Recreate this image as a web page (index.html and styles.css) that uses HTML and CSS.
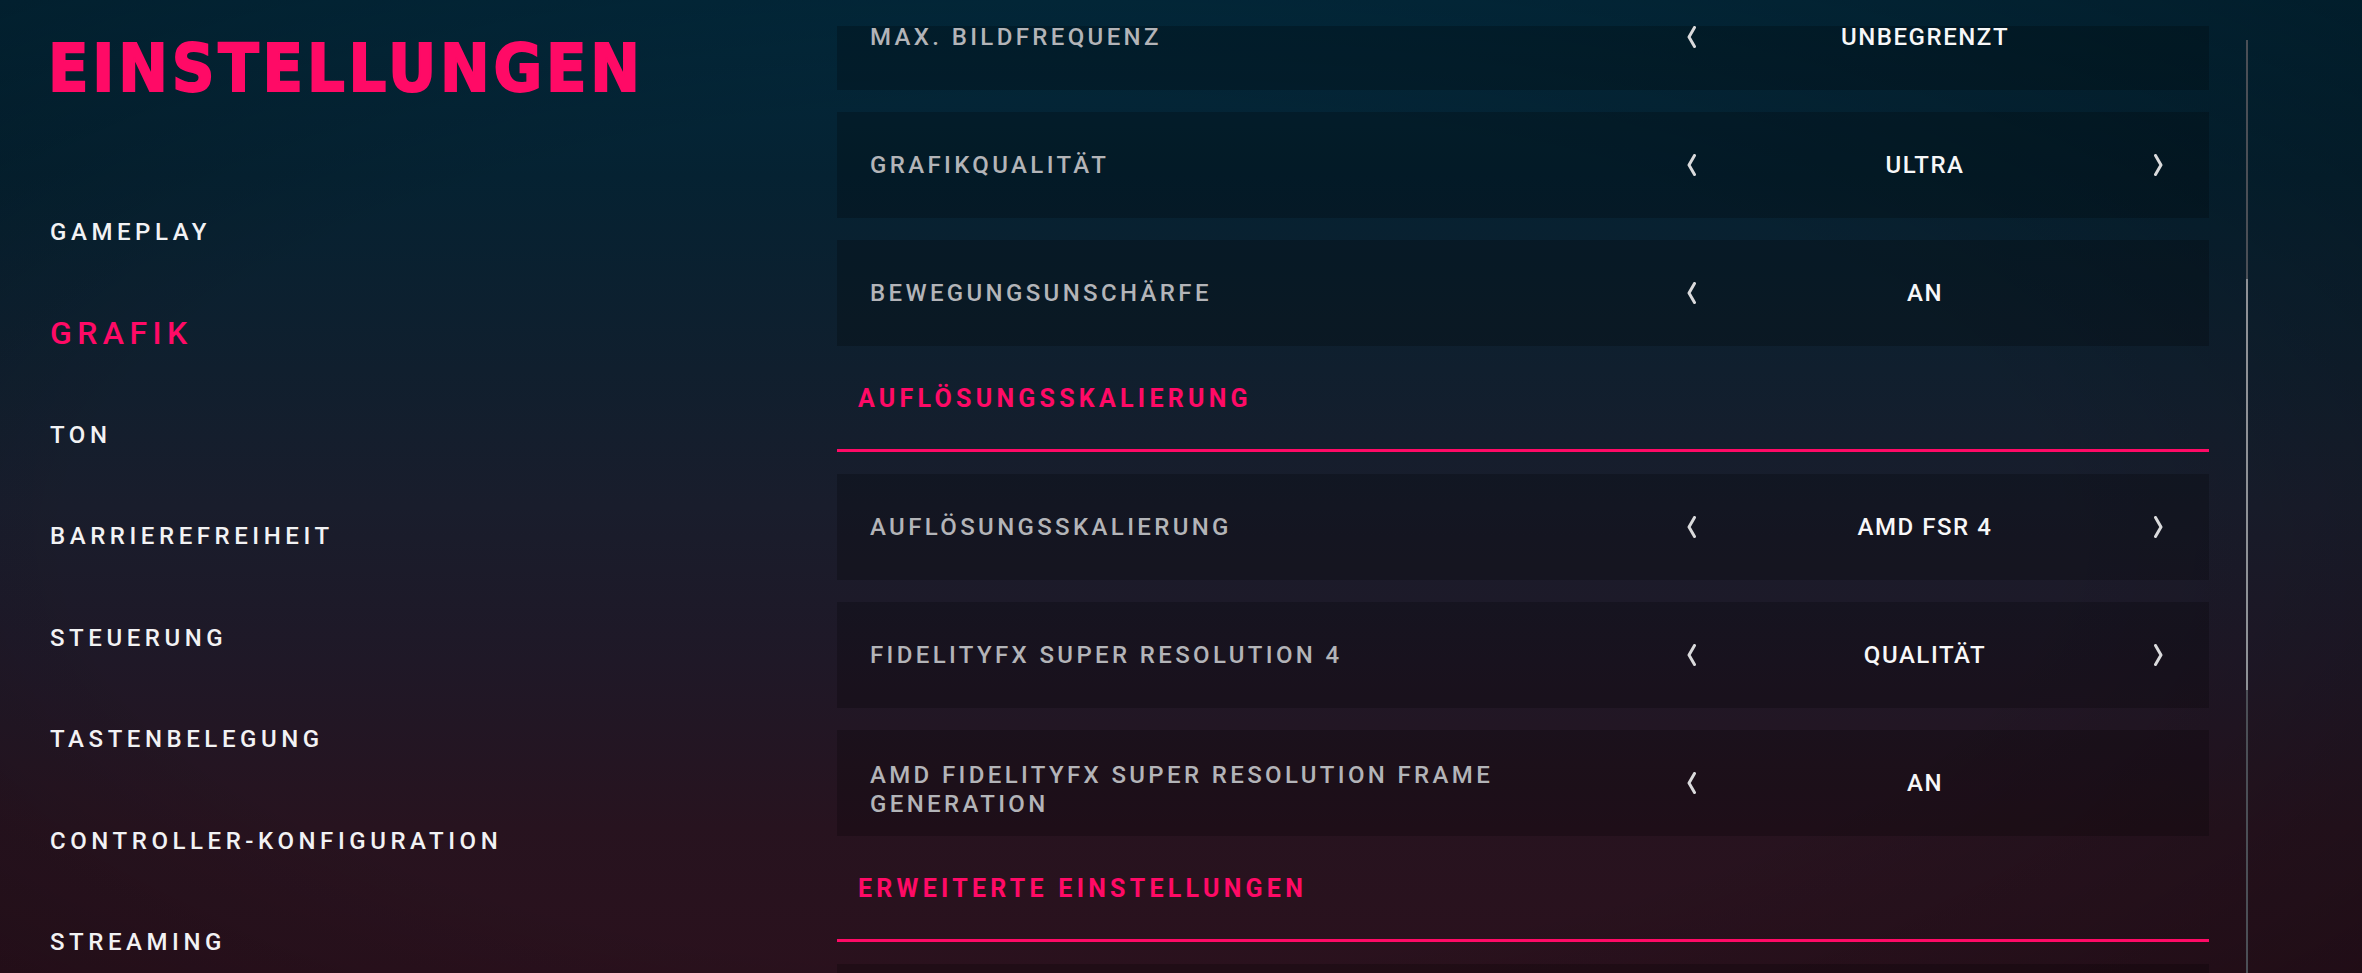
FILE: index.html
```html
<!DOCTYPE html>
<html lang="de">
<head>
<meta charset="utf-8">
<title>Einstellungen</title>
<link rel="stylesheet" href="styles.css">
</head>
<body>
<div class="screen">
  <aside class="sidebar">
    <h1 class="title">EINSTELLUNGEN</h1>
    <nav class="nav">
      <div class="nav-item">GAMEPLAY</div>
      <div class="nav-item active">GRAFIK</div>
      <div class="nav-item">TON</div>
      <div class="nav-item">BARRIEREFREIHEIT</div>
      <div class="nav-item">STEUERUNG</div>
      <div class="nav-item">TASTENBELEGUNG</div>
      <div class="nav-item">CONTROLLER-KONFIGURATION</div>
      <div class="nav-item">STREAMING</div>
    </nav>
  </aside>
  <main class="content">
    <div class="list">
      <div class="row">
        <div class="label">MAX. BILDFREQUENZ</div>
        <div class="control">
          <svg class="arrow" viewBox="0 0 9 22"><polyline points="7.5,1.5 2,11 7.5,20.5"/></svg>
          <span class="value">UNBEGRENZT</span>
          <span class="arrow-space"></span>
        </div>
      </div>
      <div class="row">
        <div class="label">GRAFIKQUALITÄT</div>
        <div class="control">
          <svg class="arrow" viewBox="0 0 9 22"><polyline points="7.5,1.5 2,11 7.5,20.5"/></svg>
          <span class="value">ULTRA</span>
          <svg class="arrow" viewBox="0 0 9 22"><polyline points="1.5,1.5 7,11 1.5,20.5"/></svg>
        </div>
      </div>
      <div class="row">
        <div class="label">BEWEGUNGSUNSCHÄRFE</div>
        <div class="control">
          <svg class="arrow" viewBox="0 0 9 22"><polyline points="7.5,1.5 2,11 7.5,20.5"/></svg>
          <span class="value">AN</span>
          <span class="arrow-space"></span>
        </div>
      </div>
      <div class="section">AUFLÖSUNGSSKALIERUNG</div>
      <div class="row">
        <div class="label">AUFLÖSUNGSSKALIERUNG</div>
        <div class="control">
          <svg class="arrow" viewBox="0 0 9 22"><polyline points="7.5,1.5 2,11 7.5,20.5"/></svg>
          <span class="value">AMD FSR 4</span>
          <svg class="arrow" viewBox="0 0 9 22"><polyline points="1.5,1.5 7,11 1.5,20.5"/></svg>
        </div>
      </div>
      <div class="row">
        <div class="label">FIDELITYFX SUPER RESOLUTION 4</div>
        <div class="control">
          <svg class="arrow" viewBox="0 0 9 22"><polyline points="7.5,1.5 2,11 7.5,20.5"/></svg>
          <span class="value">QUALITÄT</span>
          <svg class="arrow" viewBox="0 0 9 22"><polyline points="1.5,1.5 7,11 1.5,20.5"/></svg>
        </div>
      </div>
      <div class="row">
        <div class="label label-two">AMD FIDELITYFX SUPER RESOLUTION FRAME GENERATION</div>
        <div class="control">
          <svg class="arrow" viewBox="0 0 9 22"><polyline points="7.5,1.5 2,11 7.5,20.5"/></svg>
          <span class="value">AN</span>
          <span class="arrow-space"></span>
        </div>
      </div>
      <div class="section">ERWEITERTE EINSTELLUNGEN</div>
      <div class="row">
        <div class="label">&nbsp;</div>
      </div>
    </div>
  </main>
  <div class="scrollbar"><div class="thumb"></div></div>
</div>
</body>
</html>
```

FILE: styles.css
```css
html, body {
  margin: 0;
  padding: 0;
}

body {
  width: 2362px;
  height: 973px;
  overflow: hidden;
  background:
    radial-gradient(ellipse 75% 80% at 45% 55%, rgba(0,0,0,0) 55%, rgba(0,0,0,0.28) 100%),
    linear-gradient(180deg, #02293c 0%, #052232 18%, #101f2e 38%, #191d2c 52%, #1f1827 68%, #27131f 85%, #2a111d 100%);
  font-family: Roboto, "Liberation Sans", sans-serif;
}

.screen {
  display: flex;
  height: 973px;
  overflow: hidden;
}

/* ---------- sidebar ---------- */
.sidebar {
  width: 837px;
  flex: none;
  box-sizing: border-box;
  padding-left: 50px;
}

.title {
  margin: 0 0 0 -2px;
  padding-top: 36px;
  height: 68px;
  font-family: "DejaVu Sans Condensed", "DejaVu Sans", sans-serif;
  font-stretch: condensed;
  font-weight: 700;
  font-size: 66px;
  line-height: 66px;
  color: #ff0a66;
  letter-spacing: 3.8px;
  -webkit-text-stroke: 1.8px #ff0a66;
}

.nav {
  margin-top: 77px;
  display: flex;
  flex-direction: column;
}

.nav-item {
  height: 101.5px;
  display: flex;
  align-items: center;
  font-family: Roboto, "Liberation Sans", sans-serif;
  font-weight: 500;
  font-size: 24px;
  letter-spacing: 0.19em;
  color: #f2f2f4;
}

.nav-item.active {
  font-size: 32px;
  letter-spacing: 0.17em;
  color: #ff0a66;
}

/* ---------- content list ---------- */
.content {
  width: 1372px;
  flex: none;
  margin-top: 26px;
  height: 947px;
  overflow: hidden;
}

.list {
  display: flex;
  flex-direction: column;
  gap: 22px;
  margin-top: -42px;
}

.row {
  height: 106px;
  flex: none;
  display: flex;
  align-items: center;
  background: rgba(0, 0, 0, 0.22);
}

.label {
  width: 690px;
  box-sizing: border-box;
  padding-left: 33px;
  font-weight: 500;
  font-size: 24px;
  line-height: 29px;
  letter-spacing: 0.14em;
  color: #b3b4b8;
}

.label-two {
  padding-top: 13px;
}

.control {
  margin-left: auto;
  margin-right: 46px;
  width: 476px;
  display: grid;
  grid-template-columns: 9px 1fr 9px;
  align-items: center;
}

.arrow {
  width: 9px;
  height: 22px;
  display: block;
}

.arrow polyline {
  fill: none;
  stroke: #dadadc;
  stroke-width: 3;
  stroke-linecap: round;
  stroke-linejoin: round;
}

.arrow-space {
  width: 9px;
}

.value {
  text-align: center;
  font-weight: 500;
  font-size: 24px;
  letter-spacing: 0.065em;
  color: #f7f7f8;
}

.section {
  flex: none;
  padding-left: 21px;
  height: 62px;
  line-height: 62px;
  padding-bottom: 19px;
  border-bottom: 3px solid #ff0a66;
  font-weight: 700;
  font-size: 25px;
  letter-spacing: 0.17em;
  color: #ff0a66;
}

/* ---------- scrollbar ---------- */
.scrollbar {
  flex: none;
  width: 2px;
  margin-left: 37px;
  margin-top: 40px;
  height: 933px;
  background: #4b4f56;
}

.thumb {
  margin-top: 239px;
  height: 411px;
  background: #8e9196;
}
```
